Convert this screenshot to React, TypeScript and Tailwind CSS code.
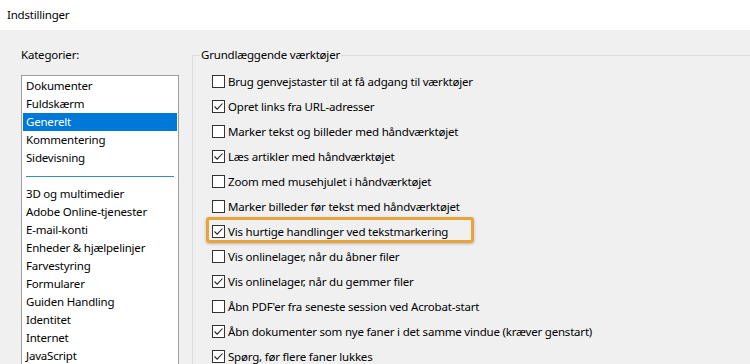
import React from 'react';

const categoriesTop = ['Dokumenter', 'Fuldskærm', 'Generelt', 'Kommentering', 'Sidevisning'];
const categoriesBottom = [
  '3D og multimedier',
  'Adobe Online-tjenester',
  'E-mail-konti',
  'Enheder & hjælpelinjer',
  'Farvestyring',
  'Formularer',
  'Guiden Handling',
  'Identitet',
  'Internet',
  'JavaScript',
];

const options: { label: string; checked: boolean; highlight?: boolean }[] = [
  { label: 'Brug genvejstaster til at få adgang til værktøjer', checked: false },
  { label: 'Opret links fra URL-adresser', checked: true },
  { label: 'Marker tekst og billeder med håndværktøjet', checked: false },
  { label: 'Læs artikler med håndværktøjet', checked: true },
  { label: 'Zoom med musehjulet i håndværktøjet', checked: false },
  { label: 'Marker billeder før tekst med håndværktøjet', checked: false },
  { label: 'Vis hurtige handlinger ved tekstmarkering', checked: true, highlight: true },
  { label: 'Vis onlinelager, når du åbner filer', checked: false },
  { label: 'Vis onlinelager, når du gemmer filer', checked: true },
  { label: "Åbn PDF'er fra seneste session ved Acrobat-start", checked: false },
  { label: 'Åbn dokumenter som nye faner i det samme vindue (kræver genstart)', checked: true },
  { label: 'Spørg, før flere faner lukkes', checked: true },
];

const Checkbox = ({ checked }: { checked: boolean }) => (
  <span className="w-[13px] h-[13px] border border-[#333333] bg-white flex items-center justify-center shrink-0">
    {checked && (
      <svg width="11" height="11" viewBox="0 0 11 11">
        <path d="M1.5 5.5 L4.2 8.2 L9.5 2.5" fill="none" stroke="#222" strokeWidth="1.1" />
      </svg>
    )}
  </span>
);

export default function App() {
  return (
    <div
      className="w-[750px] h-[364px] overflow-hidden bg-[#f0f0f0] text-black text-[11.5px] leading-[16px] tracking-[-0.2px]"
      style={{ fontFamily: '"Noto Sans", "Open Sans", sans-serif' }}
    >
      <div className="h-[30px] bg-white flex items-center pl-[7px]">Indstillinger</div>

      <div className="flex pt-[17px]">
        <div className="w-[180px] pl-[21px] shrink-0">
          <div>Kategorier:</div>
          <div className="mt-[12px] w-[158px] bg-white border border-[#a0a0a0] p-[1px]">
            {categoriesTop.map((c) => (
              <div
                key={c}
                className={`h-[18px] flex items-center pl-[3px] ${c === 'Generelt' ? 'bg-[#0078d7] text-white' : ''}`}
              >
                {c}
              </div>
            ))}
            <div className="h-[18px] flex items-center px-[3px]">
              <div className="w-full h-px bg-[#3b8ac4]" />
            </div>
            {categoriesBottom.map((c) => (
              <div key={c} className="h-[18px] flex items-center pl-[3px]">
                {c}
              </div>
            ))}
          </div>
        </div>

        <fieldset className="ml-[12px] w-[700px] shrink-0 border border-[#dcdcdc] pl-[19px] pt-[6px]">
          <legend className="ml-[-12px] px-[1px]">Grundlæggende værktøjer</legend>
          {options.map((o) => (
            <div key={o.label} className="relative h-[25px] flex items-center gap-[3px]">
              {o.highlight && (
                <span className="absolute left-[-6px] top-[-2px] w-[268px] h-[26px] border-[3px] border-[#e9a53a] rounded-[3px] shadow-[0_1px_3px_rgba(0,0,0,0.25)]" />
              )}
              <Checkbox checked={o.checked} />
              <span className="whitespace-nowrap">{o.label}</span>
            </div>
          ))}
        </fieldset>
      </div>
    </div>
  );
}
